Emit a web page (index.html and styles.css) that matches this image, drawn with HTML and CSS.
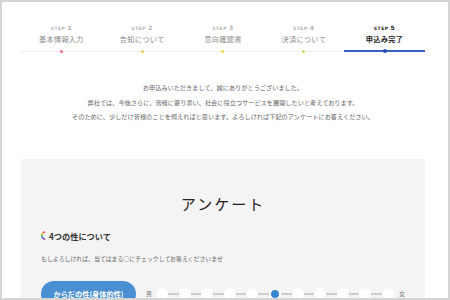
FILE: index.html
```html
<!DOCTYPE html>
<html lang="ja">
<head>
    <meta charset="UTF-8">
    <meta name="viewport" content="width=device-width, initial-scale=1.0">
    <title>申込み完了</title>
    <link rel="stylesheet" href="styles.css">
</head>
<body>
    <div class="frame">
        <!-- ステップ表示 -->
        <div class="steps">
            <div class="step step-1">
                <div class="step-no">STEP <b>1</b></div>
                <div class="step-name">基本情報入力</div>
            </div>
            <div class="step step-2">
                <div class="step-no">STEP <b>2</b></div>
                <div class="step-name">告知について</div>
            </div>
            <div class="step step-3">
                <div class="step-no">STEP <b>3</b></div>
                <div class="step-name">意向確認書</div>
            </div>
            <div class="step step-4">
                <div class="step-no">STEP <b>4</b></div>
                <div class="step-name">決済について</div>
            </div>
            <div class="step step-5 active">
                <div class="step-no">STEP <b>5</b></div>
                <div class="step-name">申込み完了</div>
            </div>
        </div>

        <div class="thanks">
            <p>お申込みいただきまして、誠にありがとうございました。</p>
            <p>弊社では、今後さらに、皆様に寄り添い、社会に役立つサービスを展開したいと考えております。</p>
            <p>そのために、少しだけ皆様のことを伺えればと思います。よろしければ下記のアンケートにお答えください。</p>
        </div>

        <div class="survey">
            <h2 class="survey-title">アンケート</h2>
            <h3 class="survey-heading">
                <svg class="heading-icon" width="5" height="9" viewBox="0 0 5 9">
                    <path d="M4.2 1 A3.5 3.5 0 0 0 2 1.8" stroke="#e84a5f" stroke-width="1.6" fill="none"/>
                    <path d="M2 1.8 A3.5 3.5 0 0 0 0.9 3.6" stroke="#f5c400" stroke-width="1.6" fill="none"/>
                    <path d="M0.9 3.6 A3.5 3.5 0 0 0 1 5.6" stroke="#3fae49" stroke-width="1.6" fill="none"/>
                    <path d="M1 5.6 A3.5 3.5 0 0 0 2.2 7.3" stroke="#3b5fd0" stroke-width="1.6" fill="none"/>
                    <path d="M2.2 7.3 A3.5 3.5 0 0 0 4.2 8" stroke="#8a3fc0" stroke-width="1.6" fill="none"/>
                </svg>
                4つの性について
            </h3>
            <p class="survey-note">もしよろしければ、当てはまる○にチェックしてお答えくださいませ</p>

            <div class="question">
                <button type="button" class="question-label">からだの性(身体的性)</button>
                <div class="scale">
                    <span class="scale-end">男</span>
                    <span class="dot"></span><span class="bar"></span>
                    <span class="dot"></span><span class="bar"></span>
                    <span class="dot"></span><span class="bar"></span>
                    <span class="dot"></span><span class="bar"></span>
                    <span class="dot"></span><span class="bar"></span>
                    <span class="dot checked"></span><span class="bar"></span>
                    <span class="dot"></span><span class="bar"></span>
                    <span class="dot"></span><span class="bar"></span>
                    <span class="dot"></span><span class="bar"></span>
                    <span class="dot"></span><span class="bar"></span>
                    <span class="dot"></span>
                    <span class="scale-end">女</span>
                </div>
            </div>
        </div>
    </div>
</body>
</html>
```

FILE: styles.css
```css
body {
    margin: 0;
    padding: 0;
    font-family: 'Noto Sans CJK JP', 'Noto Sans', sans-serif;
    background-color: #ffffff;
}
.frame {
    width: 450px;
    height: 300px;
    box-sizing: border-box;
    border: 2px solid #d4d4d4;
    padding: 0 23px 0 19px;
    overflow: hidden;
}

/* ステップ */
.steps {
    display: flex;
    padding-top: 23px;
}
.step {
    flex: 1;
    text-align: center;
    position: relative;
    padding-bottom: 7px;
    border-bottom: 1px solid #eeeeee;
}
.step::after {
    content: '';
    position: absolute;
    left: 50%;
    bottom: -2px;
    width: 3px;
    height: 3px;
    margin-left: -1.5px;
    border-radius: 50%;
}
.step-1::after { background-color: #ec6a7c; }
.step-2::after { background-color: #f3c94e; }
.step-3::after { background-color: #f3d64e; }
.step-4::after { background-color: #cdd95a; }
.step-no {
    font-family: 'DejaVu Sans', sans-serif;
    font-size: 4.5px;
    line-height: 6px;
    font-weight: bold;
    letter-spacing: 0.5px;
    color: #b0b0b0;
    margin-bottom: 2px;
}
.step-no b {
    font-size: 6px;
}
.step-name {
    font-size: 7.2px;
    line-height: 10px;
    color: #8a8a8a;
    letter-spacing: 0.3px;
}
.step.active {
    border-bottom: 2px solid #3a5fc9;
    padding-bottom: 6px;
}
.step.active::after {
    background-color: #2f4fb8;
    width: 4px;
    height: 4px;
    margin-left: -2px;
    bottom: -3px;
}
.step.active .step-no {
    color: #222222;
}
.step.active .step-name {
    color: #222222;
    font-weight: bold;
}

/* お礼文 */
.thanks {
    margin-top: 29px;
    text-align: center;
    font-size: 6.2px;
    line-height: 14.5px;
    color: #666666;
}
.thanks p {
    margin: 0;
}

/* アンケート */
.survey {
    margin-top: 34px;
    background-color: #f4f4f4;
    padding: 35px 20px 20px 20px;
    height: 200px;
}
.survey-title {
    margin: 0;
    text-align: center;
    font-size: 15px;
    line-height: 20px;
    font-weight: normal;
    letter-spacing: 2px;
    color: #222222;
}
.survey-heading {
    margin: 16px 0 0 0;
    display: flex;
    align-items: center;
    gap: 3px;
    font-size: 8.2px;
    line-height: 12px;
    font-weight: bold;
    color: #333333;
}
.heading-icon {
    display: block;
}
.survey-note {
    margin: 12px 0 0 0;
    font-size: 5.9px;
    line-height: 10px;
    color: #666666;
}
.question {
    margin-top: 17px;
    display: flex;
    align-items: center;
}
.question-label {
    width: 97px;
    height: 26px;
    border: none;
    border-radius: 13px;
    background-color: #4b8fd3;
    color: white;
    font-family: 'Noto Sans CJK JP', sans-serif;
    font-size: 7.2px;
    font-weight: bold;
    padding: 0;
}
.scale {
    display: flex;
    align-items: center;
    margin-left: 10px;
}
.scale-end {
    font-size: 6px;
    color: #777777;
}
.scale-end:first-child {
    margin-right: 4px;
}
.scale-end:last-child {
    margin-left: 5px;
}
.dot {
    width: 12px;
    height: 12px;
    border-radius: 50%;
    background-color: white;
    display: flex;
    align-items: center;
    justify-content: center;
}
.dot.checked::after {
    content: '';
    width: 8px;
    height: 8px;
    border-radius: 50%;
    background-color: #3b86d2;
}
.bar {
    width: 10.6px;
    height: 2px;
    background-color: #cccccc;
}
```
